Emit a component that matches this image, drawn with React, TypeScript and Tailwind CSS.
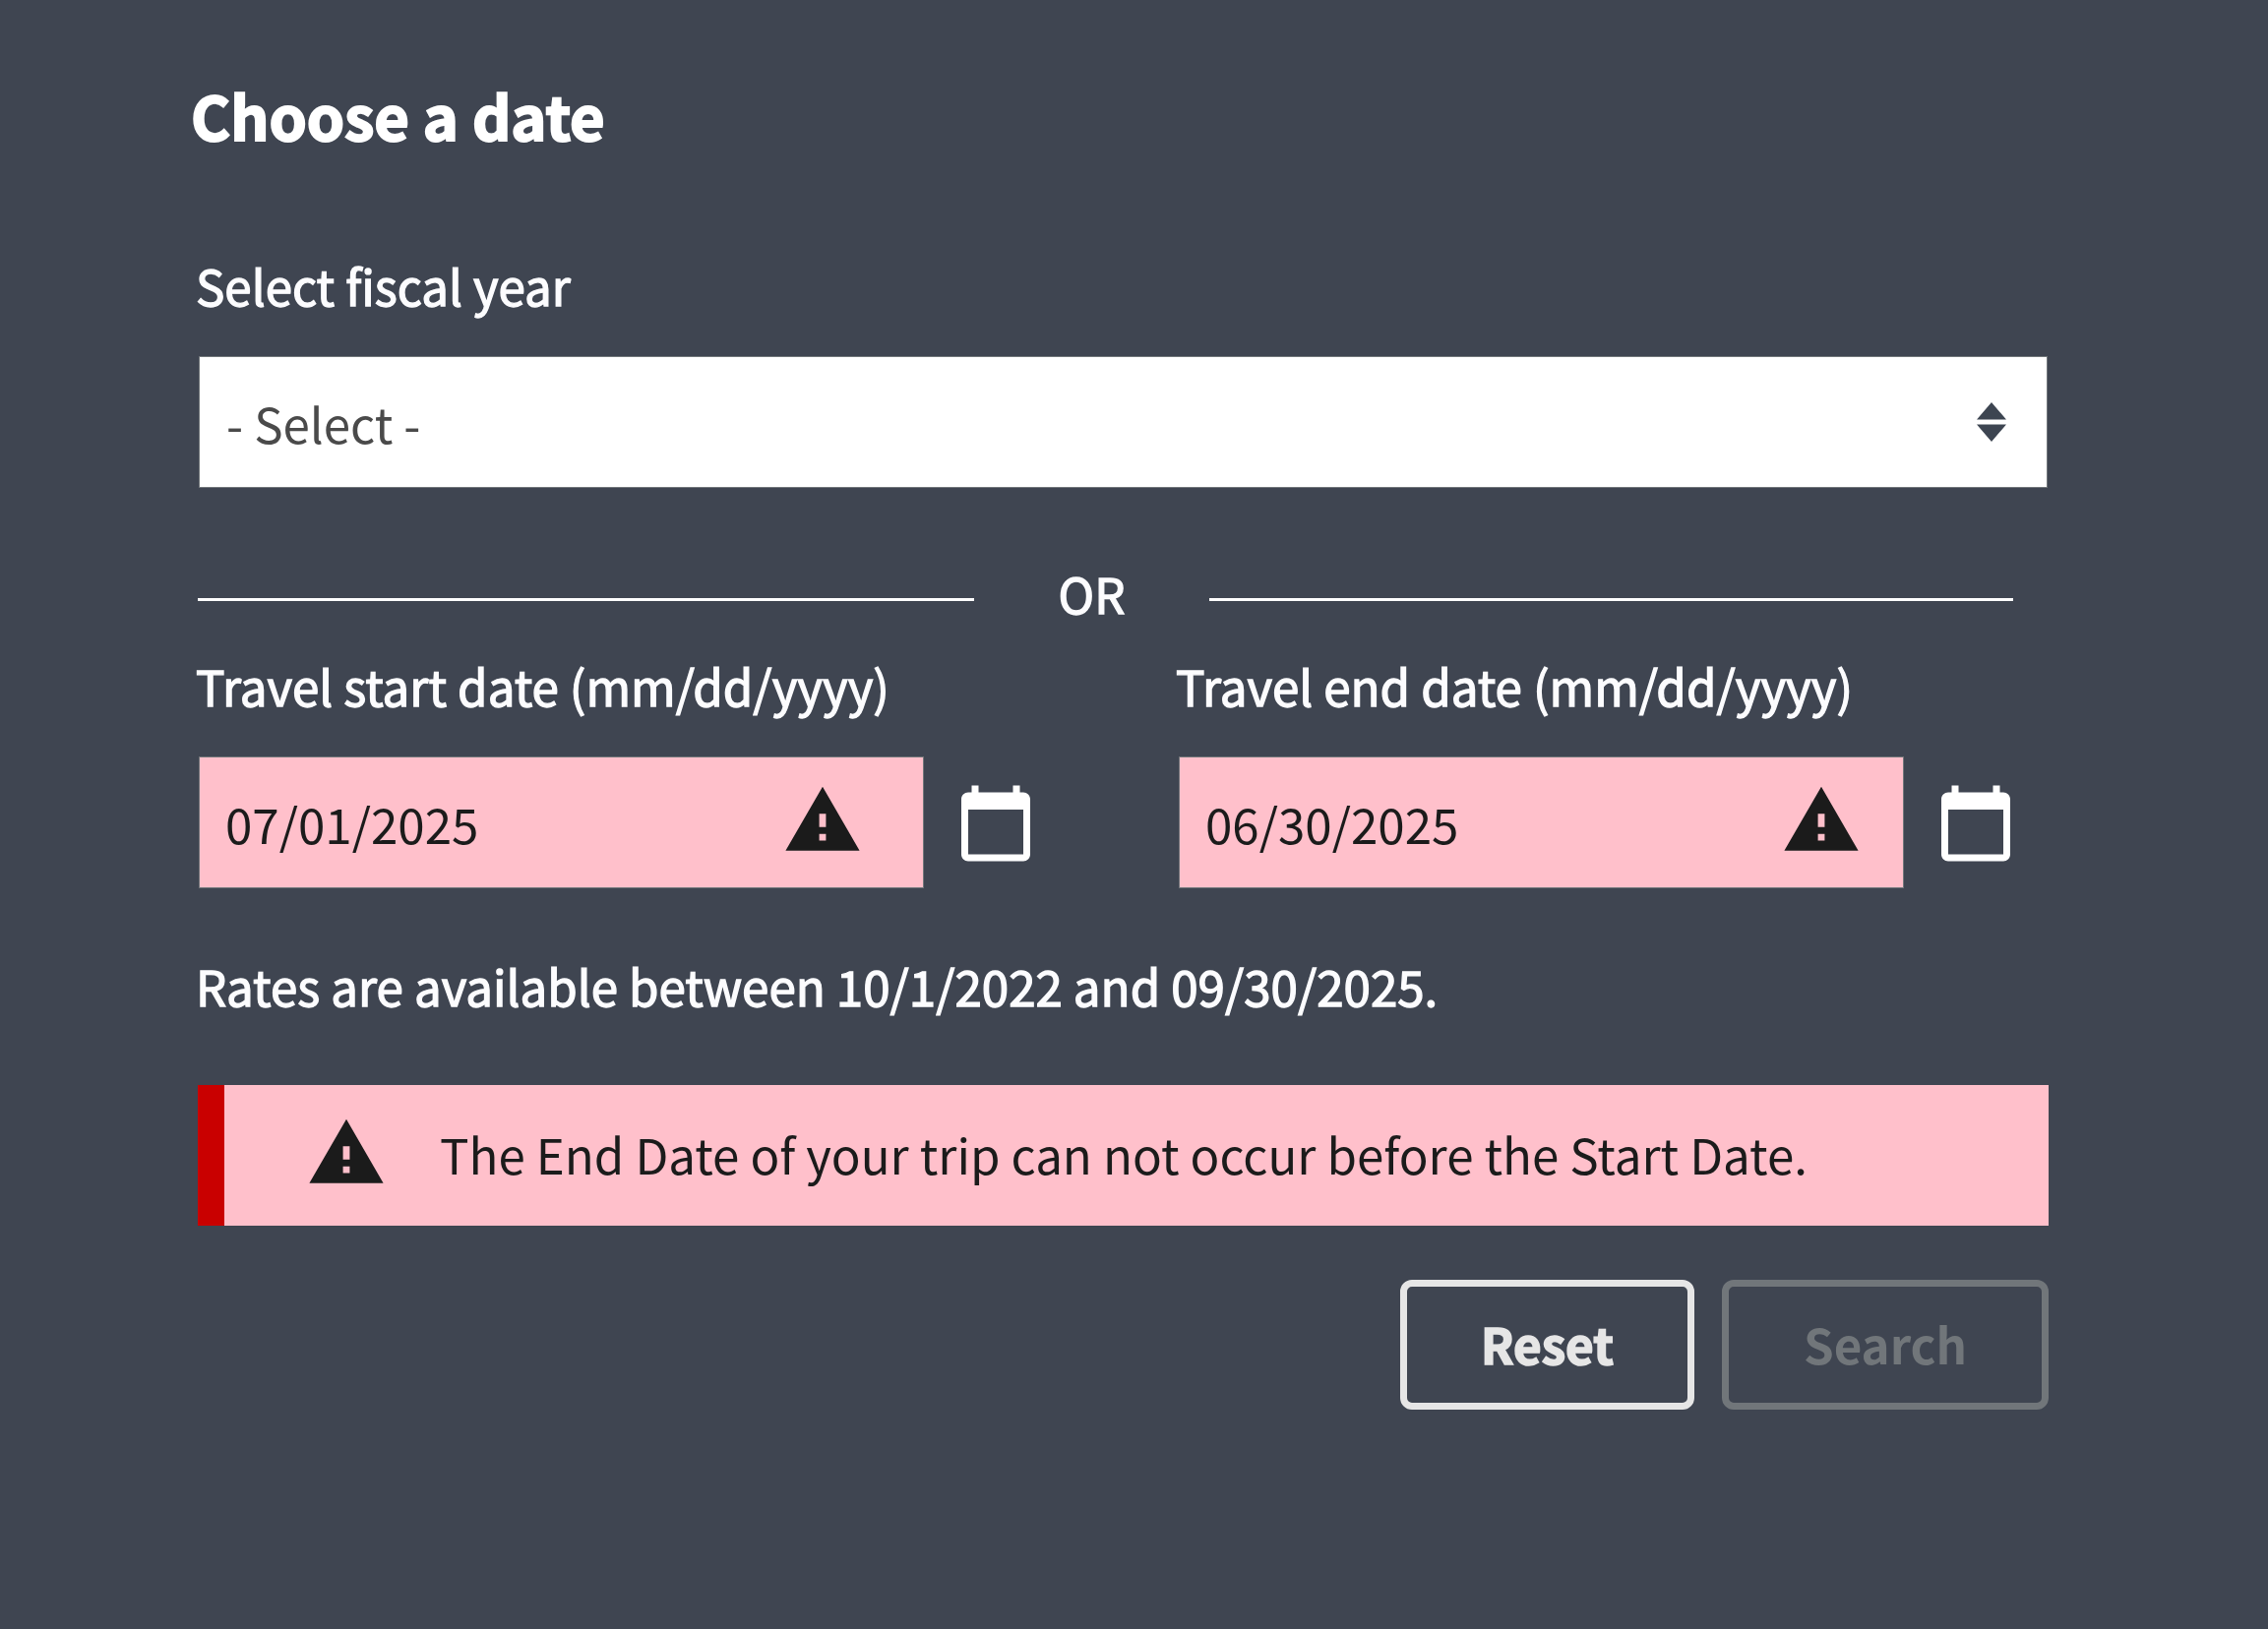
import React from 'react';

function WarningIcon({ className = '' }: { className?: string }) {
  return (
    <svg viewBox="0 0 24 24" className={`h-[82px] w-[82px] shrink-0 fill-[#1b1b1b] ${className}`} aria-hidden="true">
      <path d="M1 21h22L12 2 1 21zm12-3h-2v-2h2v2zm0-4h-2v-4h2v4z" />
    </svg>
  );
}

function CalendarIcon() {
  return (
    <svg viewBox="0 0 24 24" className="h-[84px] w-[84px] fill-white" aria-hidden="true">
      <path d="M20 3h-1V1h-2v2H7V1H5v2H4c-1.1 0-2 .9-2 2v16c0 1.1.9 2 2 2h16c1.1 0 2-.9 2-2V5c0-1.1-.9-2-2-2zm0 18H4V8h16v13z" />
    </svg>
  );
}

function SortIcon() {
  return (
    <svg viewBox="0 0 30 40" className="h-[40px] w-[30px] fill-[#3d4551]" aria-hidden="true">
      <path d="M15 0 30 17.5H0zM0 22.5h30L15 40z" />
    </svg>
  );
}

function Label({ children }: { children: React.ReactNode }) {
  return <div className="-ml-[2px] h-[60px] whitespace-nowrap text-[#fcfcfe] [-webkit-text-stroke:1.3px_#fcfcfe]">{children}</div>;
}

function DateField({ label, value, iconClass }: { label: string; value: string; iconClass: string }) {
  return (
    <div className="w-[996px] shrink-0">
      <Label>{label}</Label>
      <div className="mt-[42px] flex items-center">
        <div className="ml-px flex h-[134px] w-[737px] items-center justify-between border border-[#71767a] bg-[#ffc0cb] pl-[26px]">
          <span className="pt-[2px] text-[#1b1b1b]">{value}</span>
          <WarningIcon className={iconClass} />
        </div>
        <button className="mt-px ml-[31px]" aria-label="Open calendar">
          <CalendarIcon />
        </button>
      </div>
    </div>
  );
}

export default function App() {
  return (
    <main className="min-h-[1656px] w-full overflow-hidden bg-[#3f4551] font-['Noto_Sans_CJK_SC','Noto_Sans',sans-serif] text-[49.27px] leading-[60px]">
      <div className="ml-[201px] w-[1881px] pt-[77px]">
        <h1 className="-ml-[7px] h-[80px] text-[61.3px] leading-[80px] font-bold text-white [-webkit-text-stroke:2px_white]">Choose a date</h1>

        <div className="mt-[103px]">
          <Label>Select fiscal year</Label>
        </div>
        <div className="mt-[42px] ml-px flex h-[134px] w-[1879px] items-center justify-between border border-[#71767a] bg-white pr-[41px] pl-[27px]">
          <span className="pt-[2px] text-[#4a4a4a]">- Select -</span>
          <SortIcon />
        </div>

        <div className="mt-[77px] flex h-[60px] items-center">
          <div className="mt-[13px] h-[3px] w-[789px] bg-white" />
          <div className="w-[239px] text-center text-[#fcfcfe] [-webkit-text-stroke:1.3px_#fcfcfe]">OR</div>
          <div className="mt-[13px] h-[3px] w-[817px] bg-white" />
        </div>

        <div className="mt-[34px] flex">
          <DateField label="Travel start date (mm/dd/yyyy)" value="07/01/2025" iconClass="mr-[61px] -mt-[4px]" />
          <DateField label="Travel end date (mm/dd/yyyy)" value="06/30/2025" iconClass="mr-[42px] -mt-[4px]" />
        </div>

        <div className="mt-[69px]">
          <Label>Rates are available between 10/1/2022 and 09/30/2025.</Label>
        </div>

        <div role="alert" className="mt-[71px] flex h-[143px] items-center border-l-[27px] border-[#c90000] bg-[#ffc0cb] pl-[83px] text-[#1b1b1b]">
          <WarningIcon className="-mt-[6px]" />
          <span className="-mt-[4px] ml-[54px] whitespace-nowrap">The End Date of your trip can not occur before the Start Date.</span>
        </div>

        <div className="mt-[55px] flex justify-end gap-[28px] font-bold">
          <button className="h-[132px] w-[299px] rounded-[12px] border-[7px] border-[#e6e6e6] pb-[3px] text-[#e6e6e6] [-webkit-text-stroke:1.6px_#e6e6e6]">Reset</button>
          <button disabled className="h-[132px] w-[332px] rounded-[12px] border-[7px] border-[#71767a] pb-[3px] text-[#71767a]">
            Search
          </button>
        </div>
      </div>
    </main>
  );
}
